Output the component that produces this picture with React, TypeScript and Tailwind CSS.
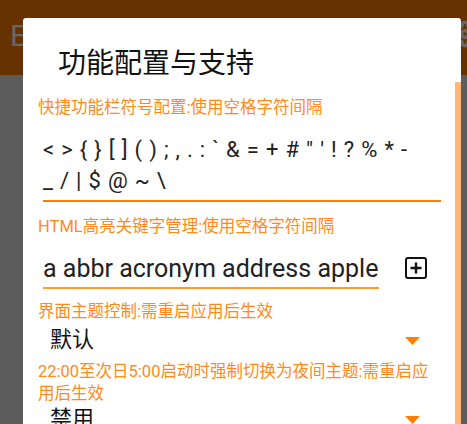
import { Settings } from "lucide-react";

const orange = "text-[#ff8a1a]";

function Label({ children }: { children: React.ReactNode }) {
  return (
    <div className={`${orange} text-[16.5px] leading-[22px] pr-[20px]`}>{children}</div>
  );
}

function Caret() {
  return (
    <svg width="15" height="8" viewBox="0 0 15 8" className="mt-[3px]">
      <path d="M0 0 L15 0 L7.5 8 Z" fill="#ff8000" />
    </svg>
  );
}

function AddBox() {
  return (
    <svg width="22" height="22" viewBox="0 0 22 22">
      <rect x="1" y="1" width="20" height="20" rx="2" fill="none" stroke="#111" strokeWidth="2" />
      <path d="M11 5.5 V16.5 M5.5 11 H16.5" stroke="#111" strokeWidth="2.4" />
    </svg>
  );
}

function Select({ value }: { value: string }) {
  return (
    <div className="flex items-center justify-between pl-[27px] pr-[41px] h-[34px]">
      <span className="text-[22px] leading-[30px] text-[#111]">{value}</span>
      <Caret />
    </div>
  );
}

export default function App() {
  return (
    <div
      className="relative w-[467px] h-[424px] overflow-hidden bg-[#5c5c5c]"
      style={{ fontFamily: 'Roboto, "Noto Sans CJK SC", sans-serif' }}
    >
      <div className="h-[75px] bg-[#663300] flex items-start pt-[18px] pl-[10px] relative">
        <span className="text-[#666] text-[30px] leading-[36px]">E</span>
        <Settings className="absolute right-[-12px] top-[20px] text-[#666]" size={28} strokeWidth={3} />
      </div>

      <div className="absolute left-[23px] top-[18px] w-[438px] bottom-0 bg-white rounded-t-[3px]">
        <div className="absolute right-0 top-[64px] bottom-0 w-[6px] bg-[#ffb877]" />

        <div
          className="pl-[35px] pt-[25px] text-[28px] leading-[36px] text-[#111]"
          style={{ fontFamily: '"Noto Sans CJK SC", sans-serif' }}
        >
          功能配置与支持
        </div>

        <div className="pl-[15px] mt-[18px]">
          <Label>快捷功能栏符号配置:使用空格字符间隔</Label>
        </div>
        <div className="pl-[20px] pr-[20px] pt-[15px]">
          <div className="text-[22px] leading-[31px] text-[#222] tracking-[0.8px] whitespace-nowrap">
            <div>{"< > { } [ ] ( ) ; , . : ` & = + # \" ' ! ? % * -"}</div>
            <div>{"_ / | $ @ ~ \\"}</div>
          </div>
          <div className="h-[2px] bg-[#ff8000] mt-[4px]" />
        </div>

        <div className="pl-[15px] mt-[14px]">
          <Label>HTML高亮关键字管理:使用空格字符间隔</Label>
        </div>
        <div className="flex items-center pl-[20px] pt-[15px]">
          <div className="w-[336px]">
            <div className="text-[25px] leading-[32px] text-[#222] whitespace-nowrap overflow-hidden">
              a abbr acronym address apple
            </div>
            <div className="h-[1.5px] bg-[#ff9933] mt-[2px]" />
          </div>
          <div className="ml-[26px] mb-[6px]">
            <AddBox />
          </div>
        </div>

        <div className="pl-[15px] mt-[12px]">
          <Label>界面主题控制:需重启应用后生效</Label>
        </div>
        <Select value="默认" />

        <div className="pl-[15px] mt-[4px]">
          <Label>22:00至次日5:00启动时强制切换为夜间主题:需重启应用后生效</Label>
        </div>
        <div className="-mt-[3px]">
          <Select value="禁用" />
        </div>
      </div>
    </div>
  );
}
